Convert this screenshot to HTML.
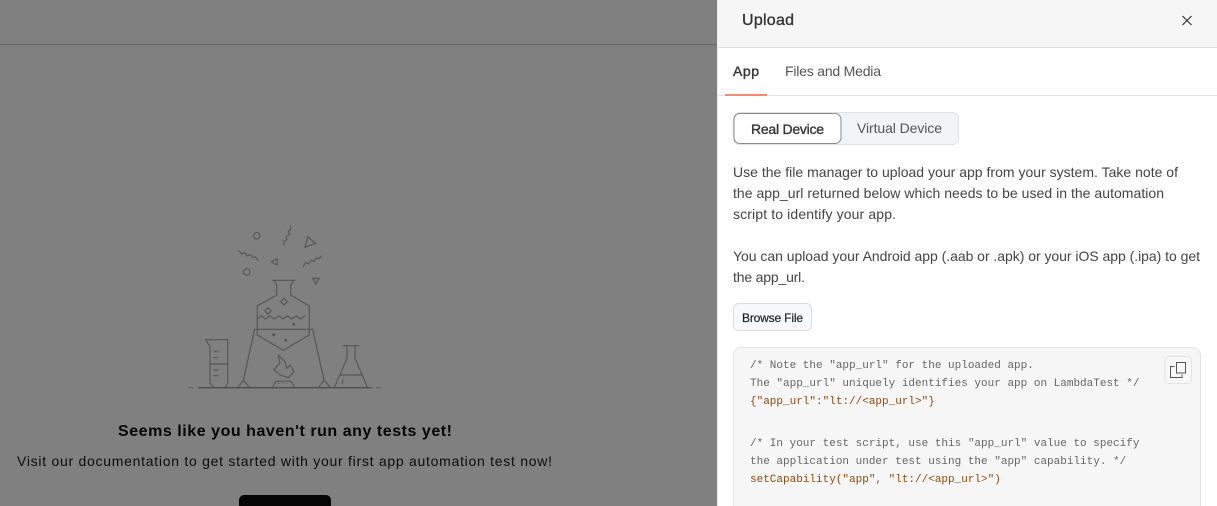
<!DOCTYPE html>
<html lang="en">
<head>
<meta charset="utf-8">
<title>Upload</title>
<style>
html,body{margin:0;padding:0;width:1217px;height:506px;overflow:hidden;background:#808080;}
svg{position:absolute;left:0;top:0;display:block;}
text{font-family:"Liberation Sans",Arial,sans-serif;}
.m{font-family:"Liberation Mono",monospace;font-size:11px;}
.p{font-size:14px;fill:#444;}
.c{fill:#666;}
.o{fill:#96480a;}
.s{stroke:#333;stroke-width:.35;fill:#333;}
.ill{fill:none;stroke:#565656;stroke-width:1.15;stroke-linejoin:round;stroke-linecap:round;}
</style>
</head>
<body>
<svg width="1217" height="506" viewBox="0 0 1217 506" xmlns="http://www.w3.org/2000/svg">
  <!-- backdrop -->
  <rect x="0" y="0" width="717" height="506" fill="#808080"/>
  <rect x="0" y="44" width="717" height="1" fill="#676767"/>

  <!-- illustration -->
  <g class="ill">
    <circle cx="256.7" cy="235.7" r="3.2"/>
    <circle cx="246.7" cy="272" r="3.2"/>
    <path d="M290.2 225.5l.9 3.8-2.9 1.8 1.2 3.2-3.4 2.4 1 2.8-3.4 2.2.8 3.3"/>
    <path d="M239 250.7l2.6 3.2 3.2-1.4 2.6 3.4 3.2-1.2 2.4 3 2.2-.8 2.8 3.4"/>
    <path d="M303.3 266.7l2.2-4.2 3.2 1.4 2.2-3.8 3.2 1.2 2.2-3.4 2.4.8 2.9-3"/>
    <path d="M307.7 236.7l8 6.6-10.7 4z"/>
    <path d="M277.3 258.7v6.3l-6.3-3.3z"/>
    <path d="M312.3 278.3h6.7l-3 5.7z"/>
    <path d="M272.3 280.3h22.7M274 280.3l2.7 5v9.7l-19.4 11v29l26 15.3 26-15.3v-29l-18.6-11v-9.7l2.9-5"/>
    <path d="M257.3 319l4-3.2 4.4 3.2 4.2-3.2 4.4 3.2 4.4-3.2 4.4 3.2 4.2-3.2 4.4 3.2 4.4-3.2 4.4 3.2 4.4-3.2"/>
    <path d="M254.7 329.3h58M254.7 329.3l-11.4 51M312.7 329.3l11.3 51"/>
    <path d="M237.7 387.7l5.6-7.4 6.7 7.4M318.3 387.7l5.7-7.4 6.7 7.4"/>
    <path d="M284 298.4l3.2 3.3-3.2 3.3-3.2-3.3zM268 307.7l3.2 3.3-3.2 3.3-3.2-3.3z"/>
    <path d="M205.7 339.7h22v43.6l-2.7 4.4M205.7 339.7l4.3 7v36.6l4 4.4M210 364h17.7"/>
    <path d="M214 351.7h4M214 357.7h4M214 370h4M214 375.7h4"/>
    <path d="M343.3 345.7h15.4M347 345.7v12.6l-12.7 29.4M355 345.7v12.6l12.7 29.4M340.3 375h22M342.3 384l.7-4"/>
    <path d="M278.3 355l6.7 6.7 1.7 6.6 3.3-3.3 4 6.7-5.7 6-8.3-2.7-6-5.7 6-6z"/>
    <path d="M272.3 387.7l3.7-6.4h14.7l4.3 6.4M279 383.5h.1M283 383.5h.1M287 383.5h.1"/>
  </g>
  <path d="M198.3 387.7H371.7" stroke="#4e4e4e" stroke-width="1.4" fill="none"/>
  <path d="M188.3 387.7h5M376 387.7h4.7" stroke="#666" stroke-width="1.3" fill="none"/>
  <circle cx="293.7" cy="324.3" r="1.5" fill="#565656"/>
  <circle cx="273.7" cy="334.7" r="1.5" fill="#565656"/>
  <circle cx="285.7" cy="340.3" r="1.5" fill="#565656"/>

  <!-- empty state text -->
  <text x="118" y="436" font-size="16" font-weight="700" fill="#060606" textLength="334" lengthAdjust="spacing">Seems like you haven't run any tests yet!</text>
  <text x="17" y="466" font-size="14" fill="#0c0c0c" textLength="535" lengthAdjust="spacing">Visit our documentation to get started with your first app automation test now!</text>
  <path d="M239 506v-6a5 5 0 0 1 5-5h82a5 5 0 0 1 5 5v6z" fill="#050505"/>

  <!-- panel -->
  <rect x="717" y="0" width="500" height="506" fill="#fff"/>
  <rect x="717" y="0" width="1" height="506" fill="#ececec"/>
  <rect x="718" y="0" width="499" height="47" fill="#f6f6f6"/>
  <rect x="718" y="47" width="499" height="1" fill="#dedede"/>
  <text class="s" x="742" y="25" font-size="16" textLength="52" lengthAdjust="spacing">Upload</text>
  <path d="M1182.5 16l9 9M1191.5 16l-9 9" stroke="#333" stroke-width="1.2" fill="none"/>

  <!-- tabs -->
  <text class="s" x="733" y="76" font-size="14" textLength="26" lengthAdjust="spacing">App</text>
  <text x="785" y="76" font-size="14" fill="#555" textLength="96" lengthAdjust="spacing">Files and Media</text>
  <rect x="718" y="95" width="499" height="1" fill="#e3e3e3"/>
  <rect x="725" y="94" width="42" height="2" fill="#f08a75"/>

  <!-- toggle -->
  <rect x="733.5" y="112.5" width="225" height="32" rx="6" fill="#f1f4f7" stroke="#dde1e5"/>
  <rect x="734" y="113.5" width="107" height="30" rx="6" fill="#fff" stroke="#8a8a8a"/>
  <text class="s" x="751" y="134" font-size="14" textLength="73" lengthAdjust="spacing">Real Device</text>
  <text x="857" y="133" font-size="14" fill="#555" textLength="85" lengthAdjust="spacing">Virtual Device</text>

  <!-- paragraph -->
  <text class="p" x="733" y="177" textLength="445" lengthAdjust="spacing">Use the file manager to upload your app from your system. Take note of</text>
  <text class="p" x="733" y="198" textLength="431" lengthAdjust="spacing">the app_url returned below which needs to be used in the automation</text>
  <text class="p" x="733" y="219" textLength="163" lengthAdjust="spacing">script to identify your app.</text>
  <text class="p" x="733" y="261" textLength="467" lengthAdjust="spacing">You can upload your Android app (.aab or .apk) or your iOS app (.ipa) to get</text>
  <text class="p" x="733" y="282" textLength="72" lengthAdjust="spacing">the app_url.</text>

  <!-- browse -->
  <rect x="733.5" y="303.5" width="78" height="27" rx="5" fill="#f7f8f9" stroke="#dcdcdc"/>
  <text x="742" y="322" font-size="12" fill="#222" stroke="#222" stroke-width=".2" textLength="61" lengthAdjust="spacing">Browse File</text>

  <!-- code -->
  <rect x="733.5" y="347.5" width="467" height="170" rx="8" fill="#f6f6f6" stroke="#e4e4e4"/>
  <text class="m c" x="750" y="368">/* Note the "app_url" for the uploaded app.</text>
  <text class="m c" x="750" y="386">The "app_url" uniquely identifies your app on LambdaTest */</text>
  <text class="m o" x="750" y="404">{"app_url":"lt://&lt;app_url&gt;"}</text>
  <text class="m c" x="750" y="446">/* In your test script, use this "app_url" value to specify</text>
  <text class="m c" x="750" y="464">the application under test using the "app" capability. */</text>
  <text class="m o" x="750" y="482">setCapability("app", "lt://&lt;app_url&gt;")</text>

  <!-- copy button -->
  <rect x="1165" y="356.5" width="26.5" height="27" rx="4" fill="#f8f8f8" stroke="#e2e2e2"/>
  <rect x="1176.5" y="362.5" width="9" height="10.5" fill="none" stroke="#555" stroke-width="1"/>
  <path d="M1174.5 366.5h-4v11h11.5v-3" fill="none" stroke="#555" stroke-width="1"/>
</svg>
</body>
</html>
